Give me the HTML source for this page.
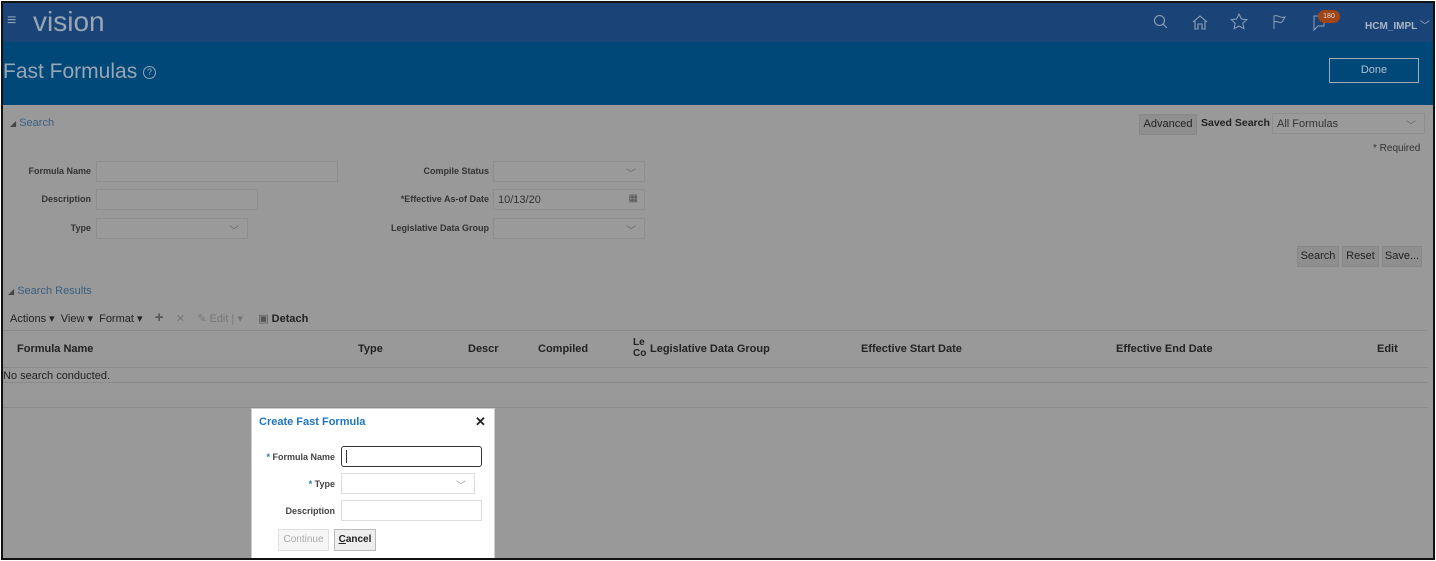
<!DOCTYPE html>
<html><head><style>
*{box-sizing:border-box;margin:0;padding:0}
body{width:1436px;height:561px;position:relative;overflow:hidden;background:#fff;font-family:"Liberation Sans",Arial,sans-serif}
.frame{position:absolute;left:1px;top:1px;width:1434px;height:559px;border:2px solid #111;background:#999;overflow:hidden}
.a{position:absolute;white-space:nowrap}
.top{position:absolute;left:0;top:0;width:100%;height:39px;background:#1a4478}
.band{position:absolute;left:0;top:39px;width:100%;height:63px;background:#004878}
.lbl{font-size:9px;font-weight:bold;color:#333;text-align:right}
.inp{position:absolute;height:21px;border:1px solid #8e8e8e;background:#9a9a9a}
.chev{position:absolute;right:8px;top:3px;font-size:10px;color:#666}
.btn{position:absolute;height:21px;border:1px solid #888;background:#8f8f8f;font-size:11px;color:#222;text-align:center;line-height:19px}
.th{font-size:11px;font-weight:bold;color:#222}
.hl{position:absolute;left:0;width:1425px;height:1px;background:#8a8a8a}
</style></head><body>
<div class="frame">
<div class="top"></div>
<div class="a" style="left:4px;top:9px;color:#8fa0b5;font-size:16px">≡</div>
<div class="a" style="left:30px;top:3px;color:#9aa6b4;font-size:28px">vision</div>
<svg class="a" style="left:1150px;top:11px" width="16" height="16" viewBox="0 0 16 16" fill="none" stroke="#8fa0b5" stroke-width="1.1"><circle cx="6.5" cy="6.5" r="5"/><path d="M10 10l4 4"/></svg>
<svg class="a" style="left:1188px;top:11px" width="18" height="16" viewBox="0 0 18 16" fill="none" stroke="#8fa0b5" stroke-width="1.1"><path d="M2 8L9 2l7 6M4 7v8h3v-5h4v5h3V7"/></svg>
<svg class="a" style="left:1227px;top:10px" width="18" height="17" viewBox="0 0 18 17" fill="none" stroke="#8fa0b5" stroke-width="1"><path d="M9 1l2.4 5 5.4.6-4 3.7 1.1 5.4L9 13l-4.9 2.7 1.1-5.4-4-3.7 5.4-.6z"/></svg>
<svg class="a" style="left:1268px;top:11px" width="16" height="16" viewBox="0 0 16 16" fill="none" stroke="#8fa0b5" stroke-width="1"><path d="M3 15V2c4-2 6 3 11 1l-3 5c-3 2-5-2-8 0"/></svg>
<svg class="a" style="left:1308px;top:11px" width="18" height="18" viewBox="0 0 18 18" fill="none" stroke="#8fa0b5" stroke-width="1"><path d="M3 2h10v10H7l-4 4z"/></svg>
<div class="a" style="left:1315px;top:7px;width:22px;height:13px;border-radius:7px;background:#a14515;color:#ddd;font-size:7px;text-align:center;line-height:13px">180</div>
<div class="a" style="left:1362px;top:14px;color:#a9b6c6;font-size:10px;font-weight:bold">HCM_IMPL <span style="font-weight:normal">﹀</span></div>
<div class="band"></div>
<div class="a" style="left:0;top:57px;color:#9aa6b4;font-size:21px">Fast Formulas <span style="border:1.2px solid #9aa6b4;border-radius:50%;display:inline-block;width:13px;height:13px;line-height:11px;text-align:center;font-size:9px;vertical-align:3px">?</span></div>
<div class="a" style="left:1326px;top:55px;width:90px;height:25px;border:1px solid #a0aab8;color:#b4bfcc;font-size:11px;text-align:center;line-height:23px">Done</div>

<div class="a" style="left:7px;top:114px;font-size:11px;color:#3a5f80"><span style="color:#444;font-size:8px">◢</span> Search</div>
<div class="btn" style="left:1136px;top:111px;width:58px">Advanced</div>
<div class="a" style="left:1198px;top:114px;font-size:10.5px;color:#222;font-weight:bold">Saved Search</div>
<div class="inp" style="left:1269px;top:110px;width:153px"><span class="a" style="left:4px;top:4px;font-size:11px;color:#333">All Formulas</span><span class="chev">﹀</span></div>
<div class="a" style="left:1370px;top:140px;font-size:10px;color:#333">* Required</div>

<div class="a lbl" style="left:0;top:163px;width:88px">Formula Name</div>
<div class="inp" style="left:93px;top:158px;width:242px"></div>
<div class="a lbl" style="left:0;top:191px;width:88px">Description</div>
<div class="inp" style="left:93px;top:186px;width:162px"></div>
<div class="a lbl" style="left:0;top:220px;width:88px">Type</div>
<div class="inp" style="left:93px;top:215px;width:152px"><span class="chev">﹀</span></div>

<div class="a lbl" style="left:380px;top:163px;width:106px">Compile Status</div>
<div class="inp" style="left:490px;top:158px;width:152px"><span class="chev">﹀</span></div>
<div class="a lbl" style="left:380px;top:191px;width:106px">*Effective As-of Date</div>
<div class="inp" style="left:490px;top:186px;width:152px"><span class="a" style="left:4px;top:4px;font-size:11px;color:#333">10/13/20</span><span class="a" style="right:6px;top:3px;font-size:10px;color:#555">▦</span></div>
<div class="a lbl" style="left:360px;top:220px;width:126px">Legislative Data Group</div>
<div class="inp" style="left:490px;top:215px;width:152px"><span class="chev">﹀</span></div>

<div class="btn" style="left:1294px;top:243px;width:42px">Search</div>
<div class="btn" style="left:1339px;top:243px;width:37px">Reset</div>
<div class="btn" style="left:1379px;top:243px;width:40px">Save...</div>

<div class="a" style="left:5px;top:282px;font-size:11px;color:#3a5f80"><span style="color:#444;font-size:8px">◢</span> Search Results</div>
<div class="a" style="left:7px;top:306px;font-size:11px;color:#222">Actions ▾ &nbsp;View ▾ &nbsp;Format ▾ &nbsp;&nbsp;&nbsp;<b style="font-size:15px;color:#555">+</b>&nbsp;&nbsp;&nbsp;&nbsp;<span style="color:#777">✕</span>&nbsp;&nbsp;&nbsp;&nbsp;<span style="color:#777">✎ Edit | ▾</span>&nbsp;&nbsp;&nbsp;&nbsp;&nbsp;<span style="color:#555">▣</span> <b>Detach</b></div>
<div class="hl" style="top:327px"></div>
<div class="a th" style="left:14px;top:340px">Formula Name</div>
<div class="a th" style="left:355px;top:340px">Type</div>
<div class="a th" style="left:465px;top:340px">Descr</div>
<div class="a th" style="left:535px;top:340px">Compiled</div>
<div class="a th" style="left:630px;top:334px;font-size:10px;line-height:11px">Le<br>Co</div>
<div class="a th" style="left:647px;top:340px">Legislative Data Group</div>
<div class="a th" style="left:858px;top:340px">Effective Start Date</div>
<div class="a th" style="left:1113px;top:340px">Effective End Date</div>
<div class="a th" style="left:1374px;top:340px">Edit</div>
<div class="hl" style="top:364px"></div>
<div class="a" style="left:0;top:367px;font-size:11px;color:#222">No search conducted.</div>
<div class="hl" style="top:379px"></div>
<div class="hl" style="top:404px"></div>

<div class="a" style="left:248px;top:405px;width:244px;height:153px;background:#fff;border:1px solid #ccc"></div>
<div class="a" style="left:256px;top:413px;font-size:11px;font-weight:bold;color:#1e76c0">Create Fast Formula</div>
<div class="a" style="left:472px;top:411px;font-size:13px;font-weight:bold;color:#222">✕</div>
<div class="a lbl" style="left:250px;top:449px;width:82px;color:#444"><span style="color:#1e76c0">*</span> Formula Name</div>
<div class="a" style="left:338px;top:443px;width:141px;height:21px;border:1.5px solid #333;border-radius:3px"><span class="a" style="left:4px;top:3px;width:1px;height:13px;background:#333"></span></div>
<div class="a lbl" style="left:250px;top:476px;width:82px;color:#444"><span style="color:#1e76c0">*</span> Type</div>
<div class="a" style="left:338px;top:470px;width:134px;height:21px;border:1px solid #ddd"><span class="chev" style="color:#999">﹀</span></div>
<div class="a lbl" style="left:250px;top:503px;width:82px;color:#444">Description</div>
<div class="a" style="left:338px;top:497px;width:141px;height:21px;border:1px solid #ddd"></div>
<div class="a" style="left:275px;top:526px;width:51px;height:22px;border:1px solid #e0e0e0;background:#f6f6f6;font-size:10px;color:#aaa;text-align:center;line-height:20px">Continue</div>
<div class="a" style="left:331px;top:526px;width:42px;height:22px;border:1px solid #bbb;background:#eee;font-size:10px;font-weight:bold;color:#222;text-align:center;line-height:20px"><u>C</u>ancel</div>
</div>
</body></html>
